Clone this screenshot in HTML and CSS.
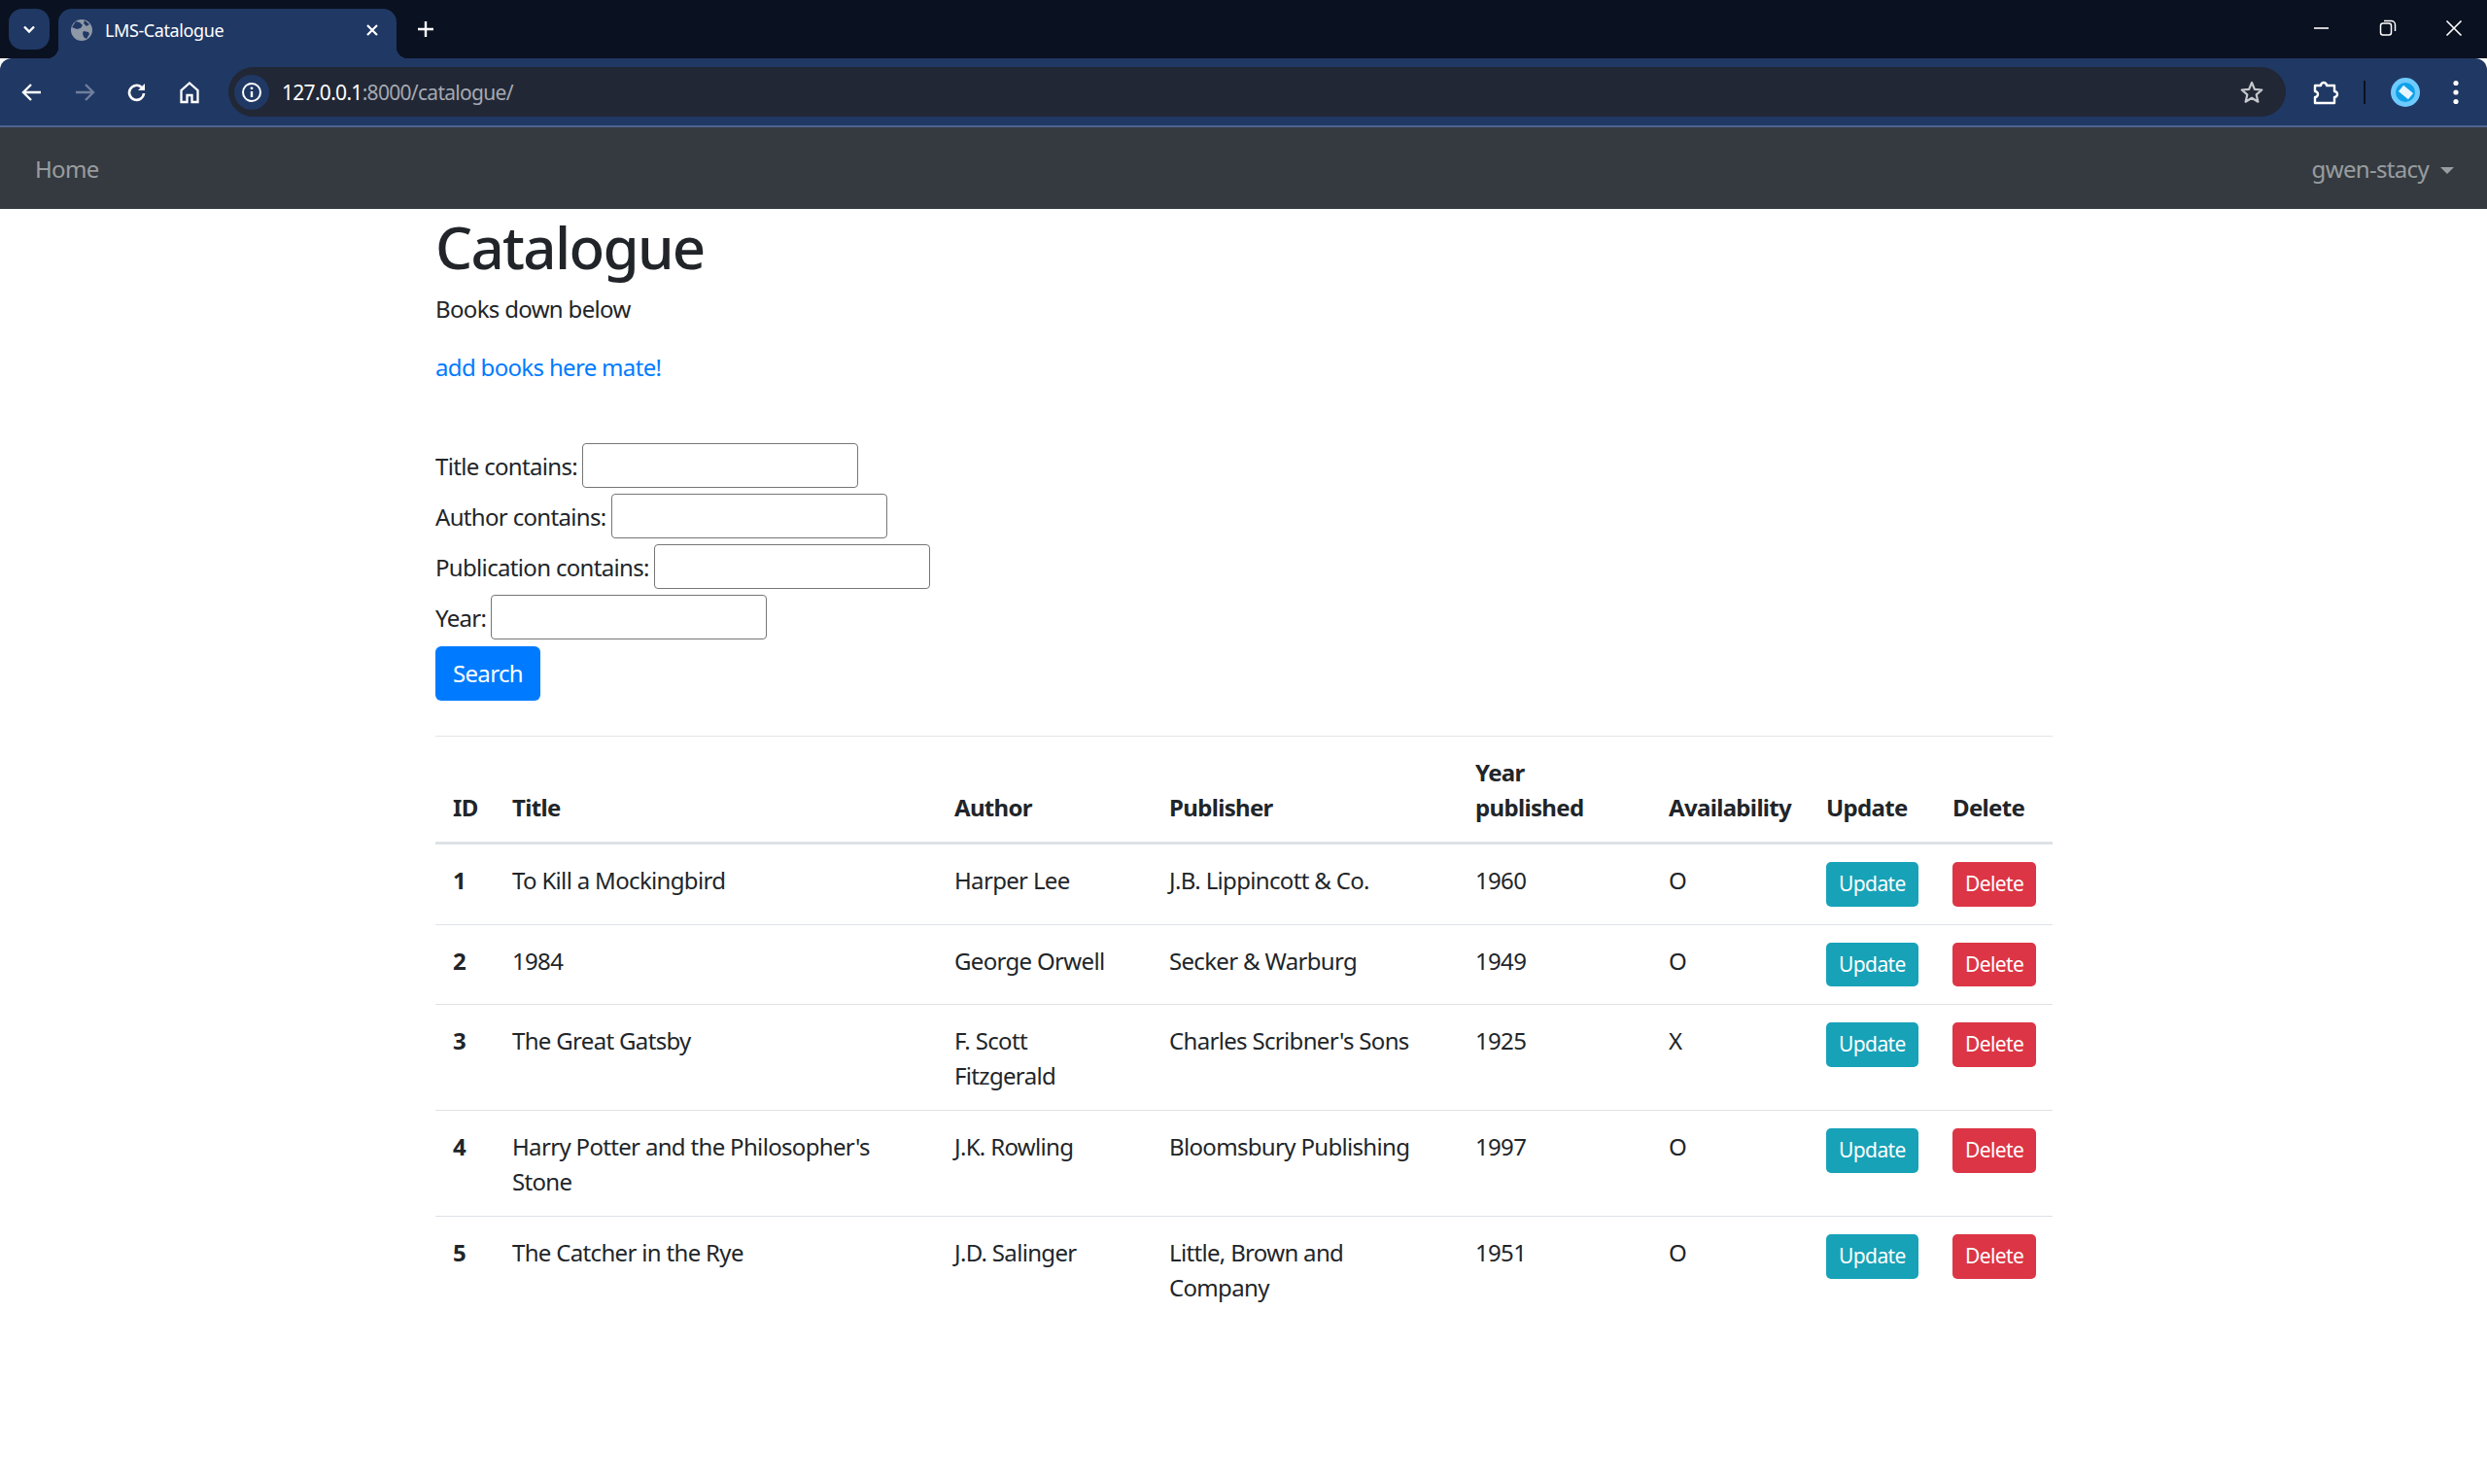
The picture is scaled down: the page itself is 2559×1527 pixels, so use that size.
FILE: index.html
```html
<!DOCTYPE html>
<html lang="en">
<head>
  <meta charset="UTF-8" />
  <title>LMS-Catalogue</title>
  <link rel="stylesheet" href="styles.css">
</head>
<body>
  <div class="tabstrip">
    <div class="tab-search">
      <svg width="18" height="18" viewBox="0 0 18 18"><path d="M4 6.5l5 5 5-5" fill="none" stroke="#fff" stroke-width="2.4"/></svg>
    </div>
    <div class="tab">
      <svg class="favicon" width="24" height="24" viewBox="0 0 24 24"><circle cx="12" cy="12" r="11" fill="#8f98a6"/><path d="M6 3l4 1 3 3-2 3-4 1-5-2zM14 13l5 1 1 2-3 5-3-2-1-4zM15 2l5 4-3 2-3-3z" fill="#203864"/></svg>
      <span class="tab-title">LMS-Catalogue</span>
      <svg class="tab-close" width="16" height="16" viewBox="0 0 16 16"><path d="M3 3l10 10M13 3L3 13" stroke="#fff" stroke-width="2.2"/></svg>
    </div>
    <svg class="new-tab" width="20" height="20" viewBox="0 0 20 20"><path d="M10 2v16M2 10h16" stroke="#fff" stroke-width="2.4"/></svg>
    <div class="window-controls">
      <svg width="18" height="18" viewBox="0 0 18 18"><path d="M1 9h15" stroke="#fff" stroke-width="1.6"/></svg>
      <svg width="18" height="18" viewBox="0 0 18 18"><rect x="1.5" y="4" width="11" height="12" rx="2.5" fill="none" stroke="#fff" stroke-width="1.5"/><path d="M5 1.5h7.5a4 4 0 0 1 4 4V12" fill="none" stroke="#fff" stroke-width="1.5"/></svg>
      <svg width="18" height="18" viewBox="0 0 18 18"><path d="M1.5 1.5l15 15M16.5 1.5l-15 15" stroke="#fff" stroke-width="1.6"/></svg>
    </div>
  </div>

  <div class="toolbar">
    <div class="nav-icons">
      <svg width="24" height="24" viewBox="0 0 24 24"><path d="M21 12H4M11 4l-8 8 8 8" fill="none" stroke="#fff" stroke-width="2.4"/></svg>
      <svg width="24" height="24" viewBox="0 0 24 24"><path d="M3 12h17M13 4l8 8-8 8" fill="none" stroke="#6f7f9c" stroke-width="2.4"/></svg>
      <svg width="24" height="24" viewBox="0 0 24 24"><path d="M19 13a7.5 7.5 0 1 1-2.4-6.2" fill="none" stroke="#fff" stroke-width="2.6"/><path d="M20 3v7h-7z" fill="#fff"/></svg>
      <svg width="24" height="24" viewBox="0 0 24 24"><path d="M3.500 22V10L12 2.500 20.500 10v12h-6v-7h-5v7z" fill="none" stroke="#fff" stroke-width="2.300"/></svg>
    </div>
    <div class="omnibox">
      <div class="site-info">
        <svg width="22" height="22" viewBox="0 0 22 22"><circle cx="11" cy="11" r="9" fill="none" stroke="#fff" stroke-width="2"/><path d="M11 10v6" stroke="#fff" stroke-width="2.400"/><circle cx="11" cy="6.800" r="1.400" fill="#fff"/></svg>
      </div>
      <span class="url"><span class="url-host">127.0.0.1</span>:8000/catalogue/</span>
      <svg class="star" width="26" height="26" viewBox="0 0 26 26"><path d="M13 3l2.900 6.900 7.400.6-5.600 4.900 1.700 7.300L13 18.800l-6.400 3.900 1.700-7.300-5.600-4.900 7.400-.6z" fill="none" stroke="#c4c7cc" stroke-width="2.200" stroke-linejoin="round"/></svg>
    </div>
    <div class="toolbar-right">
      <svg class="puzzle" width="28" height="28" viewBox="0 0 28 28"><path d="M3 7h6a3 3 0 0 1 6 0h8v6a3 3 0 0 1 0 6v6H3v-6a3 3 0 0 0 0-6z" fill="none" stroke="#fff" stroke-width="2.400" stroke-linejoin="round"/></svg>
      <div class="toolbar-divider"></div>
      <div class="avatar">
        <div class="avatar-inner"><div class="avatar-mark"></div></div>
      </div>
      <svg width="8" height="26" viewBox="0 0 8 26"><circle cx="4" cy="3.500" r="2.600" fill="#fff"/><circle cx="4" cy="13" r="2.600" fill="#fff"/><circle cx="4" cy="22.500" r="2.600" fill="#fff"/></svg>
    </div>
  </div>

  <nav class="navbar">
    <a class="nav-link" href="#">Home</a>
    <a class="nav-link dropdown" href="#">gwen-stacy</a>
  </nav>

  <main class="container">
    <h1>Catalogue</h1>
    <p>Books down below</p>
    <p><a href="#">add books here mate!</a></p>

    <form class="filter">
      <div class="filter-row"><label for="title">Title contains:</label> <input type="text" id="title"></div>
      <div class="filter-row"><label for="author">Author contains:</label> <input type="text" id="author"></div>
      <div class="filter-row"><label for="publication">Publication contains:</label> <input type="text" id="publication"></div>
      <div class="filter-row"><label for="year">Year:</label> <input type="text" id="year"></div>
      <button type="submit" class="btn btn-primary">Search</button>
    </form>

    <hr>

    <table class="table">
      <colgroup>
        <col class="col-id"><col class="col-title"><col class="col-author"><col class="col-publisher">
        <col class="col-year"><col class="col-avail"><col class="col-update"><col class="col-delete">
      </colgroup>
      <thead>
        <tr>
          <th>ID</th><th>Title</th><th>Author</th><th>Publisher</th><th>Year published</th><th>Availability</th><th>Update</th><th>Delete</th>
        </tr>
      </thead>
      <tbody>
        <tr>
          <th>1</th><td>To Kill a Mockingbird</td><td>Harper Lee</td><td>J.B. Lippincott &amp; Co.</td><td>1960</td><td>O</td>
          <td class="action"><a class="btn btn-sm btn-info" href="#">Update</a></td><td class="action"><a class="btn btn-sm btn-danger" href="#">Delete</a></td>
        </tr>
        <tr>
          <th>2</th><td>1984</td><td>George Orwell</td><td>Secker &amp; Warburg</td><td>1949</td><td>O</td>
          <td class="action"><a class="btn btn-sm btn-info" href="#">Update</a></td><td class="action"><a class="btn btn-sm btn-danger" href="#">Delete</a></td>
        </tr>
        <tr>
          <th>3</th><td>The Great Gatsby</td><td>F. Scott<br>Fitzgerald</td><td>Charles Scribner's Sons</td><td>1925</td><td>X</td>
          <td class="action"><a class="btn btn-sm btn-info" href="#">Update</a></td><td class="action"><a class="btn btn-sm btn-danger" href="#">Delete</a></td>
        </tr>
        <tr>
          <th>4</th><td>Harry Potter and the Philosopher's Stone</td><td>J.K. Rowling</td><td>Bloomsbury Publishing</td><td>1997</td><td>O</td>
          <td class="action"><a class="btn btn-sm btn-info" href="#">Update</a></td><td class="action"><a class="btn btn-sm btn-danger" href="#">Delete</a></td>
        </tr>
        <tr>
          <th>5</th><td>The Catcher in the Rye</td><td>J.D. Salinger</td><td>Little, Brown and Company</td><td>1951</td><td>O</td>
          <td class="action"><a class="btn btn-sm btn-info" href="#">Update</a></td><td class="action"><a class="btn btn-sm btn-danger" href="#">Delete</a></td>
        </tr>
      </tbody>
    </table>
  </main>
</body>
</html>
```

FILE: styles.css
```css
* {
  box-sizing: border-box;
}
body {
  margin: 0;
  font-family: "Noto Sans", "Open Sans", sans-serif;
  font-size: 24px;
  line-height: 36px;
  color: #212529;
  background: #fff;
}

/* browser chrome */
.tabstrip {
  height: 60px;
  background: #0a1120;
  display: flex;
  align-items: center;
  position: relative;
}
.tab-search {
  width: 42px;
  height: 42px;
  margin-left: 9px;
  background: #203864;
  border-radius: 14px;
  display: flex;
  align-items: center;
  justify-content: center;
}
.tab {
  width: 348px;
  height: 51px;
  margin-left: 9px;
  margin-top: 9px;
  padding: 0 17px 7px 12px;
  background: #203864;
  border-radius: 14px 14px 0 0;
  display: flex;
  align-items: center;
  color: #fff;
  font-size: 18px;
  line-height: 24px;
  position: relative;
}
.tab::before, .tab::after {
  content: "";
  position: absolute;
  bottom: 0;
  width: 12px;
  height: 12px;
}
.tab::before {
  left: -12px;
  background: radial-gradient(circle at 0 0, transparent 12px, #203864 12.5px);
}
.tab::after {
  right: -12px;
  background: radial-gradient(circle at 100% 0, transparent 12px, #203864 12.5px);
}
.tab-title {
  margin-left: 12px;
  flex: 1;
  letter-spacing: -0.4px;
}
.new-tab {
  margin-left: 20px;
}
.window-controls {
  position: absolute;
  right: 25px;
  top: 20px;
  display: flex;
  gap: 50px;
}
.toolbar {
  height: 71px;
  background: #203864;
  border-bottom: 2px solid #4f6490;
  border-radius: 12px 12px 0 0;
  display: flex;
  align-items: center;
}
.nav-icons {
  width: 235px;
  padding-left: 21px;
  display: flex;
  gap: 30px;
}
.omnibox {
  width: 2117px;
  height: 51px;
  background: #212735;
  border-radius: 26px;
  display: flex;
  align-items: center;
  padding: 0 22px 0 6px;
}
.site-info {
  width: 36px;
  height: 36px;
  border-radius: 50%;
  background: #203864;
  display: flex;
  align-items: center;
  justify-content: center;
}
.url {
  margin-left: 13px;
  flex: 1;
  font-size: 21px;
  color: #a5a9b1;
  letter-spacing: -0.7px;
}
.url-host {
  color: #fff;
}
.toolbar-right {
  flex: 1;
  padding-left: 27px;
  display: flex;
  align-items: center;
}
.toolbar-divider {
  width: 2px;
  height: 24px;
  margin-left: 25px;
  background: #0a1120;
}
.avatar {
  width: 30px;
  height: 30px;
  margin: 0 33px 0 26px;
  border-radius: 50%;
  background: #6ecbff;
  display: flex;
  align-items: center;
  justify-content: center;
}
.avatar-inner {
  width: 20px;
  height: 20px;
  border-radius: 50%;
  background: #0fa0ea;
  display: flex;
  align-items: center;
  justify-content: center;
}
.avatar-mark {
  width: 13px;
  height: 8px;
  background: #e8f6ff;
  transform: rotate(40deg);
}

/* page navbar */
.navbar {
  height: 84px;
  padding: 2px 34px 0 36px;
  background: #343a40;
  display: flex;
  align-items: center;
  justify-content: space-between;
}
.nav-link {
  color: rgba(255, 255, 255, .5);
  text-decoration: none;
  letter-spacing: -0.67px;
}
.dropdown::after {
  content: "";
  display: inline-block;
  margin-left: 12px;
  vertical-align: 4px;
  border-top: 7px solid rgba(255, 255, 255, .5);
  border-left: 7px solid transparent;
  border-right: 7px solid transparent;
}

/* content */
.container {
  width: 1665px;
  margin: 0 auto;
  padding-left: 1px;
  letter-spacing: -0.67px;
}
h1 {
  margin: 0 0 9px;
  padding-top: 3px;
  font-size: 60px;
  line-height: 72px;
  font-weight: 500;
  letter-spacing: -1.7px;
}
p {
  margin: 0 0 24px;
  padding-top: 1px;
}
p + p {
  padding-top: 0;
}
a {
  color: #007bff;
  text-decoration: none;
}
.filter {
  margin-top: 57px;
}
.filter-row {
  height: 52px;
  display: flex;
  align-items: center;
  gap: 5px;
}
.filter-row label {
  padding-top: 1px;
}
.filter-row input {
  width: 284px;
  height: 46px;
  border: 1.5px solid #767676;
  border-radius: 4px;
  background: #fff;
}
.btn {
  display: inline-block;
  border: none;
  border-radius: 6px;
  color: #fff;
  font-family: inherit;
  font-size: 24px;
  line-height: 36px;
  letter-spacing: -0.67px;
  padding: 10px 18px;
}
.btn-primary {
  background: #007bff;
  margin-top: 4px;
}
.btn-sm {
  display: block;
  width: fit-content;
  font-size: 21px;
  line-height: 31.5px;
  letter-spacing: -0.6px;
  padding: 7px 13px;
  border-radius: 5px;
}
.btn-info {
  background: #17a2b8;
}
.btn-danger {
  background: #dc3545;
}
hr {
  margin: 36px 0 0;
  border: none;
  border-top: 1.5px solid #e5e6e7;
}

.table {
  width: 100%;
  border-collapse: collapse;
  table-layout: fixed;
}
.table th, .table td {
  padding: 19px 18px 17px;
  text-align: left;
  vertical-align: top;
  border-top: 1.5px solid #dee2e6;
}
.table td.action {
  padding: 18px 0 18px 18px;
}
.table th {
  font-weight: 700;
}
.table thead th {
  vertical-align: bottom;
  border-top: none;
  border-bottom: 3px solid #dee2e6;
}
.col-id { width: 61px; }
.col-title { width: 455px; }
.col-author { width: 221px; }
.col-publisher { width: 315px; }
.col-year { width: 199px; }
.col-avail { width: 162px; }
.col-update { width: 130px; }
.col-delete { width: 121px; }
```
